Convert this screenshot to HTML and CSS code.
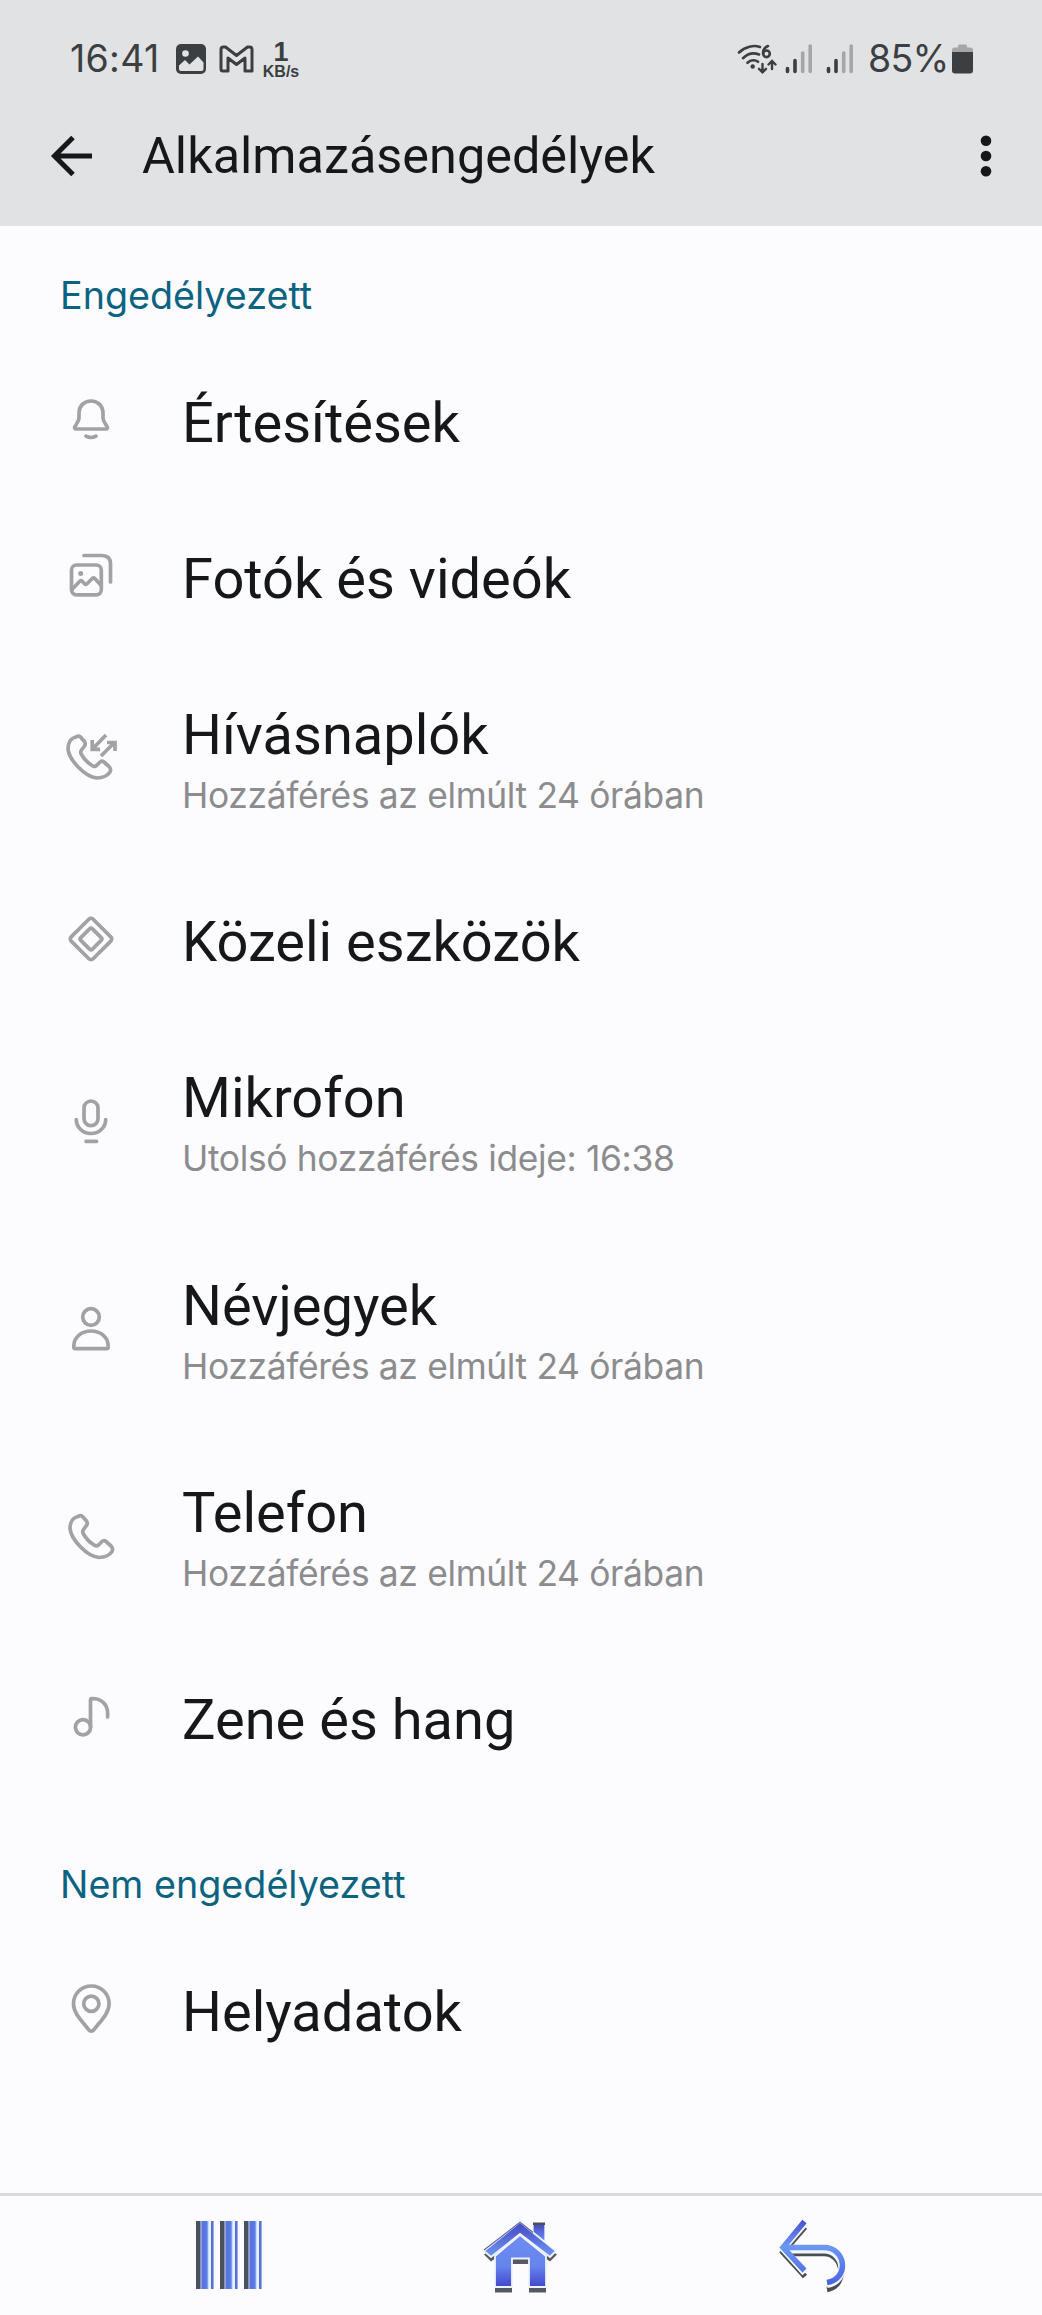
FILE: index.html
```html
<!DOCTYPE html>
<html lang="hu">
<head>
<meta charset="UTF-8">
<meta name="viewport" content="width=device-width, initial-scale=1">
<title>Alkalmazásengedélyek</title>
<link rel="stylesheet" href="styles.css">
</head>
<body>
<header class="header">
  <div class="status">
    <span class="clock">16:41</span>
    <svg class="st-photo" width="30" height="30" viewBox="0 0 30 30">
      <rect width="30" height="30" rx="5" fill="#3c3f42"/>
      <circle cx="9.500" cy="9.500" r="3.300" fill="#e1e2e4"/>
      <path d="M3 21.500L9 16l4.500 4.500L22 12.500l5.500 6V25q0 2-2 2H5q-2 0-2-2z" fill="#e1e2e4"/>
    </svg>
    <svg class="st-mail" width="35" height="28" viewBox="0 0 35 28">
      <path d="M2 4.500Q2 2 4.500 2H6.500L17.500 10.500 28.500 2H30.500Q33 2 33 4.500V26H26V13L17.500 19.500 9 13V26H4Q2 26 2 24z" fill="none" stroke="#3c3f42" stroke-width="3" stroke-linejoin="round"/>
    </svg>
    <div class="speed"><b>1</b><span>KB/s</span></div>
    <div class="status-right">
      <svg class="st-wifi" width="40" height="30" viewBox="0 0 40 30">
        <g fill="none" stroke="#3c3f42" stroke-width="2.600" stroke-linecap="round">
          <path d="M2 8.500C8 2.500 17 0.800 23 3M6 14.200C11 9.300 17 8.500 22 10.500M10.500 18.800C14 15.500 18.500 15.800 21 17.800"/>
          <path d="M25.500 20V28M22 24.800L25.500 28.300 29 24.800M35 25V17.500M31.500 20.500L35 17 38.500 20.500" stroke-width="2.400"/>
          <path d="M31 2C27.500 3.500 26 6 26 9.300"/><circle cx="29.500" cy="9.800" r="3.300"/>
        </g>
        <circle cx="15.700" cy="22.500" r="2.200" fill="#3c3f42"/>
      </svg>
      <svg class="st-signal" width="28" height="30" viewBox="0 0 28 30">
        <path d="M2.500 24.500V27.500M10 16.500V27.500" stroke="#3c3f42" stroke-width="3.600" stroke-linecap="round"/>
        <path d="M17.700 9V27.500M25.200 2V27.500" stroke="#a5a6a8" stroke-width="3.600" stroke-linecap="round"/>
      </svg>
      <svg class="st-signal" width="28" height="30" viewBox="0 0 28 30">
        <path d="M2.500 24.500V27.500M10 16.500V27.500" stroke="#3c3f42" stroke-width="3.600" stroke-linecap="round"/>
        <path d="M17.700 9V27.500M25.200 2V27.500" stroke="#a5a6a8" stroke-width="3.600" stroke-linecap="round"/>
      </svg>
      <span class="percent">85%</span>
      <svg class="st-battery" width="21" height="30" viewBox="0 0 21 30">
        <path d="M0 8V6q0-2.500 2.500-2.500H6V2q0-1.500 1.500-1.500h6Q15 .5 15 2v1.500h3.500Q21 3.500 21 6v2z" fill="#a5a6a8"/>
        <path d="M0 8h21v18.500q0 3-3 3H3q-3 0-3-3z" fill="#3c3f42"/>
      </svg>
    </div>
  </div>
  <div class="appbar">
    <svg class="back" width="44" height="44" viewBox="0 0 44 44">
      <path d="M42 22H5M23 3.500L4.500 22 23 40.500" fill="none" stroke="#15171a" stroke-width="5"/>
    </svg>
    <h1>Alkalmazásengedélyek</h1>
    <svg class="more" width="12" height="44" viewBox="0 0 12 44" fill="#15171a">
      <circle cx="6" cy="6.700" r="5.300"/><circle cx="6" cy="22" r="5.300"/><circle cx="6" cy="37.200" r="5.300"/>
    </svg>
  </div>
</header>

<main class="content">
  <h2 class="section">Engedélyezett</h2>
  <ul class="list">
    <li class="row">
      <svg class="icon" viewBox="0 0 72 72">
        <path d="M36 16c-7 0-12 5-12 12v5c0 3.500-3 6-4.300 9-.5 1.200.3 2 1.300 2h30c1 0 1.800-.8 1.300-2-1.300-3-4.300-5.500-4.300-9v-5c0-7-5-12-12-12zM31 51.200q5 2.600 10 0"/>
      </svg>
      <div class="text"><p class="name">Értesítések</p></div>
    </li>
    <li class="row">
      <svg class="icon" viewBox="0 0 72 72">
        <path d="M29 14.500h18q8.500 0 8.500 8.500v18M17 48.500l7.500-8q1.500-1.500 3 0l2 2.200q1.300 1.200 2.500 0l5-5q1.500-1.500 3 0l6 6.500"/>
        <rect x="16.500" y="24" width="29.800" height="29.800" rx="5"/>
        <circle class="dot" cx="25.700" cy="32.500" r="2.500"/>
      </svg>
      <div class="text"><p class="name">Fotók és videók</p></div>
    </li>
    <li class="row tall">
      <svg class="icon" viewBox="0 0 72 72">
        <path d="M21 15C16 16 13 21 13 27 14 38 30 55 42 56 48 56 53 53 55 50 56 48 55.500 46 54 44.500L49 40C47.500 38.800 46 39 45 40L41.500 43.500C40 44.800 38.500 44.500 37 43.500 33 41 29 37 26.500 32.500 25.500 31 25.500 29.500 26.500 28L29.500 24C30.500 22.500 30.500 21 29.500 19.500L25.500 15C24.500 14 22.500 14 21 15z"/>
        <path class="sharp" d="M51 13L38 26.500M37.200 18V27.300H45M46 34L59 21M52 20.500H60V29"/>
      </svg>
      <div class="text"><p class="name">Hívásnaplók</p><p class="sub">Hozzáférés az elmúlt 24 órában</p></div>
    </li>
    <li class="row">
      <svg class="icon" viewBox="0 0 72 72">
        <rect x="20.500" y="19.500" width="31" height="31" rx="3" transform="rotate(45 36 35)"/>
        <rect x="27.800" y="26.800" width="16.400" height="16.400" rx="2" transform="rotate(45 36 35)"/>
      </svg>
      <div class="text"><p class="name">Közeli eszközök</p></div>
    </li>
    <li class="row tall">
      <svg class="icon" viewBox="0 0 72 72">
        <rect x="29" y="15" width="14" height="24.700" rx="7"/>
        <path d="M21.300 33.500c0 8 6.600 14 14.700 14s14.700-6 14.700-14M31 55.300h10.500"/>
      </svg>
      <div class="text"><p class="name">Mikrofon</p><p class="sub">Utolsó hozzáférés ideje: 16:38</p></div>
    </li>
    <li class="row tall">
      <svg class="icon" viewBox="0 0 72 72">
        <circle cx="36" cy="24" r="8.300"/>
        <path d="M18.800 53c0-9 8-15 17.200-15s17.200 6 17.200 15v1q0 1.600-1.600 1.600H20.400q-1.600 0-1.600-1.600z"/>
      </svg>
      <div class="text"><p class="name">Névjegyek</p><p class="sub">Hozzáférés az elmúlt 24 órában</p></div>
    </li>
    <li class="row tall">
      <svg class="icon" viewBox="0 0 72 72">
        <path transform="translate(2 .5)" d="M21 15C16 16 13 21 13 27 14 38 30 55 42 56 48 56 53 53 55 50 56 48 55.500 46 54 44.500L49 40C47.500 38.800 46 39 45 40L41.500 43.500C40 44.800 38.500 44.500 37 43.500 33 41 29 37 26.500 32.500 25.500 31 25.500 29.500 26.500 28L29.500 24C30.500 22.500 30.500 21 29.500 19.500L25.500 15C24.500 14 22.500 14 21 15z"/>
      </svg>
      <div class="text"><p class="name">Telefon</p><p class="sub">Hozzáférés az elmúlt 24 órában</p></div>
    </li>
    <li class="row">
      <svg class="icon" viewBox="0 0 72 72">
        <circle cx="28" cy="45.300" r="7.600"/>
        <path d="M35.500 45.300V18c0-1 .6-1.500 1.600-1.500C46 16.500 52.600 22 52.600 31.500v3.500"/>
      </svg>
      <div class="text"><p class="name">Zene és hang</p></div>
    </li>
  </ul>
  <h2 class="section denied">Nem engedélyezett</h2>
  <ul class="list">
    <li class="row">
      <svg class="icon" viewBox="0 0 72 72">
        <path d="M36.300 12C26 12 18.500 20 18.500 29.800 18.500 40 28 48 33.500 55.500Q36.300 58.800 39.100 55.500C44.500 48 54.100 40 54.100 29.800 54.100 20 46.500 12 36.300 12z"/>
        <circle cx="36.300" cy="29.700" r="7.600"/>
      </svg>
      <div class="text"><p class="name">Helyadatok</p></div>
    </li>
  </ul>
</main>

<nav class="nav">
  <div class="recents"><i></i><i></i><i></i></div>
  <svg class="home" width="76" height="76" viewBox="0 0 76 76">
    <defs>
      <linearGradient id="wall" x1="0" y1="0" x2="0" y2="1"><stop offset="0" stop-color="#6f8cf0"/><stop offset=".6" stop-color="#6584ee"/><stop offset="1" stop-color="#4347cc"/></linearGradient>
      <linearGradient id="roof" x1="0" y1="0" x2="0" y2="1"><stop offset="0" stop-color="#4345c0"/><stop offset="1" stop-color="#6f98f5"/></linearGradient>
    </defs>
    <path d="M12 40L37 18 63 40V71.500H46V43H29V71.500H12zM1 33.500L37 7 74 33.500 67 40.500 37 19 8 40.500z" fill="#555a62"/>
    <path d="M50 2.500H62V21L50 12z" fill="url(#roof)" stroke="#f4f8ff" stroke-width="1.300"/>
    <path d="M50 1.500H62V4H50z" fill="#4a4f5c"/>
    <path d="M12 35L37 14 63 35V66H46V37.500H29V66H12z" fill="url(#wall)" stroke="#eef4ff" stroke-width="1.800"/>
    <path d="M1 30L37 1 73 30 67 36 37 13 8 36z" fill="url(#roof)" stroke="#eef4ff" stroke-width="1.800"/>
    <path d="M1 29L37 1.200 50 11.500" fill="none" stroke="#6468a0" stroke-width="1.200"/>
  </svg>
  <svg class="return" width="72" height="78" viewBox="0 0 72 78">
    <defs>
      <linearGradient id="arr" x1="0" y1="0" x2="0" y2="1"><stop offset="0" stop-color="#4a54d2"/><stop offset=".4" stop-color="#6d98f5"/><stop offset="1" stop-color="#4b66e0"/></linearGradient>
    </defs>
    <g fill="none" stroke-linejoin="miter">
      <path d="M27 9L5 34.500 27 58.500M8 35.500H46C66 35.500 70 68 49 71.500" stroke="#4a4d54" stroke-width="5.500"/>
      <path d="M27 5L5 30.500 27 55M8 32H46C67 32 71 63 49 66.500" stroke="#f2f7ff" stroke-width="7"/>
      <path d="M26.500 3.500L5 29.500 26.500 52.500M8 29.500H46C68 29.500 72 60.500 49 64.500" stroke="url(#arr)" stroke-width="5.500"/>
    </g>
  </svg>
</nav>
</body>
</html>
```
FILE: styles.css
```css
* { margin: 0; padding: 0; box-sizing: border-box; }
ul { list-style: none; }
svg { display: block; flex: none; }
body {
  display: flex;
  flex-direction: column;
  width: 1042px;
  height: 2315px;
  background: #fcfcfe;
  color: #15171a;
  font-family: Roboto, "Liberation Sans", sans-serif;
  overflow: hidden;
}

/* header */
.header {
  height: 226px;
  background: #e1e2e4;
}
.status {
  display: flex;
  align-items: center;
  height: 118px;
  padding: 0 69px 0 70px;
  color: #3c3f42;
}
.clock,
.percent {
  font-family: Inter, sans-serif;
  font-weight: 400;
  font-size: 37.5px;
  line-height: 44px;
  white-space: nowrap;
}
.clock { width: 106px; letter-spacing: 0.3px; }
.st-mail { margin-left: 13px; }
.speed {
  display: flex;
  flex-direction: column;
  align-items: center;
  width: 38px;
  margin-left: 8px;
  font-family: "Liberation Sans", sans-serif;
  font-weight: bold;
}
.speed b { font-size: 27px; line-height: 26px; }
.speed span { font-size: 16px; line-height: 14px; }
.status-right {
  display: flex;
  align-items: center;
  margin-left: auto;
}
.st-signal { margin-left: 8px; }
.st-signal + .st-signal { margin-left: 13px; }
.percent { width: 84px; margin-left: 14px; letter-spacing: -0.8px; }
.appbar {
  display: flex;
  align-items: center;
  height: 76px;
  padding: 0 50px 0 50px;
}
.appbar h1 {
  margin-left: 48px;
  font-size: 50.4px;
  font-weight: 400;
  line-height: 60px;
}
.more { margin-left: auto; }

/* permission list */
.content { flex: 1; }
.section {
  height: 117px;
  padding: 46px 0 0 60px;
  color: #0b6381;
  font-family: Inter, sans-serif;
  font-size: 37.7px;
  font-weight: 400;
  line-height: 46px;
}
.denied { margin-top: 19px; }
.row {
  display: flex;
  align-items: center;
  height: 155.8px;
  padding-left: 55px;
}
.tall { height: 207.5px; }
.icon {
  width: 72px;
  height: 72px;
  fill: none;
  stroke: #a2a2a4;
  stroke-width: 3.7;
  stroke-linecap: round;
  stroke-linejoin: round;
}
.icon .dot { fill: #a2a2a4; stroke: none; }
.icon .sharp { stroke-linecap: butt; stroke-linejoin: miter; }
.text { margin-left: 55px; padding-top: 4px; }
.tall .text { padding-top: 9px; }
.name {
  font-size: 56px;
  line-height: 66px;
}
.sub {
  color: #8c8c8e;
  font-family: Inter, sans-serif;
  font-size: 35.4px;
  line-height: 56px;
  letter-spacing: -0.35px;
}

/* navigation bar */
.nav {
  display: flex;
  height: 122px;
  padding: 25px 0 0 196px;
  border-top: 3px solid #dadadc;
}
.recents { display: flex; gap: 6px; height: 68px; }
.recents i {
  width: 18px;
  background: linear-gradient(90deg, #4a5060 0 4px, #c8d6f5 5px, #5570dc 6px, #5a7ce6 11px, #a5c4f8 12px, #e6f4ff 13px 14.5px, #5a70d4 15.5px 17px, #dfe6f8 18px);
}
.home { margin: 0 0 0 221px; }
.return { margin: -3px 0 0 219px; }
```
